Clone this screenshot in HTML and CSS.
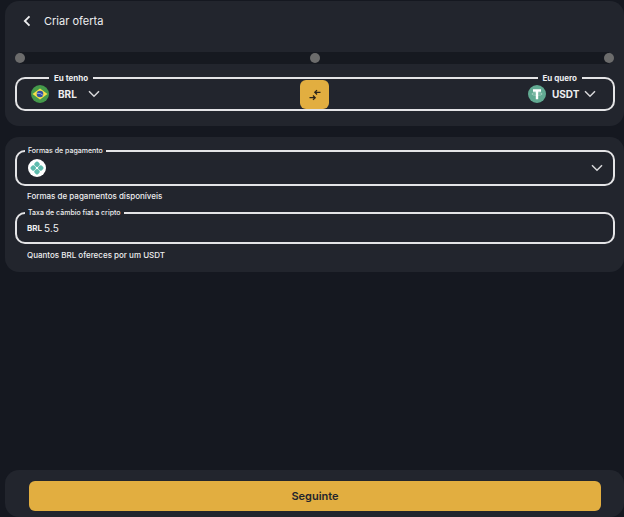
FILE: index.html
```html
<!DOCTYPE html>
<html lang="pt">
<head>
    <meta charset="UTF-8">
    <meta name="viewport" content="width=device-width, initial-scale=1.0">
    <title>Criar oferta</title>
    <link rel="stylesheet" href="styles.css">
</head>
<body>
    <main class="page">
        <section class="card card-top">
            <header class="header">
                <button type="button" class="back" aria-label="Voltar">
                    <svg width="8" height="12" viewBox="0 0 8 12"><path d="M6.500 1.300 1.800 6l4.700 4.700" fill="none" stroke="currentColor" stroke-width="1.800"/></svg>
                </button>
                <h1>Criar oferta</h1>
            </header>

            <div class="steps">
                <span class="dot"></span>
                <span class="dot"></span>
                <span class="dot"></span>
            </div>

            <div class="exchange">
                <fieldset class="side side-have">
                    <legend><label for="have">Eu tenho</label></legend>
                    <div class="coin">
                        <svg class="coin-icon" width="18" height="18" viewBox="0 0 18 18">
                            <circle cx="9" cy="9" r="9" fill="#459a4b"/>
                            <path d="M9 3.500 16.500 9 9 14.500 1.500 9z" fill="#f5e04b"/>
                            <circle cx="9" cy="9" r="3.300" fill="#3450a4"/>
                            <path d="M6 8.300q3.500-.5 6 2" fill="none" stroke="#a9bbdd" stroke-width=".8"/>
                        </svg>
                        <select id="have" class="select-have">
                            <option>BRL</option>
                            <option>USD</option>
                        </select>
                        <svg class="chevron" width="12" height="8" viewBox="0 0 12 8"><path d="M1 1.300 6 6.300l5-5"/></svg>
                    </div>
                </fieldset>
                <button type="button" class="swap" aria-label="Trocar moedas">
                    <svg width="12" height="12" viewBox="0 0 12 12"><path d="M11.500 3.300H6M8 1.100 5.800 3.300 8 5.500M.5 8.700H6M4 6.500l2.200 2.200L4 10.900" fill="none" stroke="currentColor" stroke-width="1.300"/></svg>
                </button>
                <fieldset class="side side-want">
                    <legend><label for="want">Eu quero</label></legend>
                    <div class="coin">
                        <svg class="coin-icon" width="18" height="18" viewBox="0 0 18 18">
                            <circle cx="9" cy="9" r="9" fill="#62aa92"/>
                            <ellipse cx="9" cy="9" rx="5.200" ry="1.300" fill="none" stroke="#b5d8cb" stroke-width=".7"/>
                            <path d="M5 4.300h8v2.400h-2.800v7.500H7.800V6.700H5z" fill="#fff"/>
                        </svg>
                        <select id="want" class="select-want">
                            <option>USDT</option>
                            <option>BTC</option>
                        </select>
                        <svg class="chevron" width="12" height="8" viewBox="0 0 12 8"><path d="M1 1.300 6 6.300l5-5"/></svg>
                    </div>
                </fieldset>
            </div>
        </section>

        <section class="card card-details">
            <fieldset class="field">
                <legend><label for="payment">Formas de pagamento</label></legend>
                <div class="payment">
                    <svg width="18" height="18" viewBox="0 0 18 18">
                        <circle cx="9" cy="9" r="9" fill="#fff"/>
                        <g transform="rotate(45 9 9)" fill="#5dbbad">
                            <rect x="4" y="4" width="4.700" height="4.700" rx="1.300"/>
                            <rect x="9.300" y="4" width="4.700" height="4.700" rx="1.300"/>
                            <rect x="4" y="9.300" width="4.700" height="4.700" rx="1.300"/>
                            <rect x="9.300" y="9.300" width="4.700" height="4.700" rx="1.300"/>
                        </g>
                    </svg>
                    <select id="payment" class="select-payment">
                        <option value="pix" label=" "></option>
                    </select>
                    <svg class="chevron" width="12" height="8" viewBox="0 0 12 8"><path d="M1 1.300 6 6.300l5-5"/></svg>
                </div>
            </fieldset>
            <p class="hint">Formas de pagamentos disponíveis</p>

            <fieldset class="field">
                <legend><label for="rate">Taxa de câmbio fiat a cripto</label></legend>
                <div class="rate">
                    <span class="currency">BRL</span>
                    <input type="text" id="rate" inputmode="decimal" value="5.5">
                </div>
            </fieldset>
            <p class="hint">Quantos BRL ofereces por um USDT</p>
        </section>

        <footer class="card footer">
            <button type="submit" class="next">Seguinte</button>
        </footer>
    </main>
</body>
</html>
```
FILE: styles.css
```css
* {
    box-sizing: border-box;
}

body {
    margin: 0;
    background-color: #151820;
    color: #eeeef0;
    font-family: 'Inter', sans-serif;
    font-size: 8px;
    line-height: 12px;
}

.page {
    display: flex;
    flex-direction: column;
    min-height: 100vh;
    padding: 1px 0 0 5px;
}

.card {
    background-color: #22252d;
    border-radius: 14px;
    padding: 10px 9px 10px 10px;
}

button,
input,
select {
    font: inherit;
    color: inherit;
    border: none;
    background: none;
    padding: 0;
    margin: 0;
}

button,
select {
    cursor: pointer;
}

fieldset {
    border: 2px solid #e4e4e6;
    border-radius: 10px;
    margin: 0;
    padding: 0;
    min-width: 0;
}

legend {
    line-height: 10px;
}

select {
    appearance: none;
}

.card-top {
    padding-bottom: 15px;
}

.header {
    display: flex;
    align-items: center;
    gap: 9px;
    height: 20px;
    padding-left: 4px;
}

.back {
    display: flex;
    padding: 4px;
}

h1 {
    margin: 0;
    font-size: 11px;
    font-weight: 400;
}

.steps {
    display: flex;
    justify-content: space-between;
    align-items: center;
    height: 12px;
    margin: 21px 6px 9px 5px;
    background-color: #161920;
}

.dot {
    width: 10px;
    height: 10px;
    margin: 0 -5px;
    border-radius: 50%;
    background-color: #6c6c6c;
}

.exchange {
    display: flex;
    position: relative;
}

.side {
    flex: 1;
}

.side legend {
    padding: 0 5px;
    font-weight: 700;
}

.side-have {
    border-right: none;
    border-radius: 10px 0 0 10px;
    padding-left: 14px;
}

.side-have legend {
    margin-left: 18px;
}

.side-want {
    border-left: none;
    border-radius: 0 10px 10px 0;
    padding-right: 17px;
}

.side-want legend {
    margin-left: auto;
    margin-right: 14px;
}

.coin {
    display: flex;
    align-items: center;
    height: 26px;
    padding-bottom: 4px;
    font-size: 10px;
    font-weight: 700;
}

.side-want .coin {
    justify-content: flex-end;
}

.select-have {
    width: 30px;
    margin-left: 9px;
}

.select-want {
    width: 32px;
    margin-left: 6px;
}

.chevron {
    fill: none;
    stroke: #d8d8da;
    stroke-width: 1.5;
    flex: none;
}

/* sits over the line where both halves meet */
.swap {
    position: absolute;
    top: 7px;
    left: 50%;
    width: 29px;
    height: 29px;
    margin-left: -15px;
    display: flex;
    align-items: center;
    justify-content: center;
    border-radius: 6px;
    background-color: #e2ae40;
    color: #2a2419;
}

.card-details {
    margin-top: 11px;
    padding-top: 9px;
}

.field legend {
    margin-left: 8px;
    padding: 0 3px;
    font-size: 7px;
    font-weight: 500;
}

.payment,
.rate {
    display: flex;
    align-items: center;
    padding: 0 10px;
}

.payment {
    height: 28px;
    padding-left: 11px;
    padding-bottom: 4px;
}

.rate {
    height: 24px;
    padding-bottom: 4px;
    gap: 2px;
}

.select-payment {
    flex: 1;
}

.currency {
    font-weight: 700;
}

.rate input {
    flex: 1;
    min-width: 0;
    font-size: 10px;
    outline: none;
}

.hint {
    margin: 4px 12px 6px;
    font-weight: 500;
}

.hint:last-child {
    margin: 5px 12px 1px;
}

.footer {
    margin-top: auto;
    padding: 11px 23px 6px 24px;
}

.next {
    display: block;
    width: 100%;
    height: 30px;
    border-radius: 6px;
    background-color: #e2ae40;
    color: #22252d;
    font-size: 11px;
    font-weight: 600;
}
```
